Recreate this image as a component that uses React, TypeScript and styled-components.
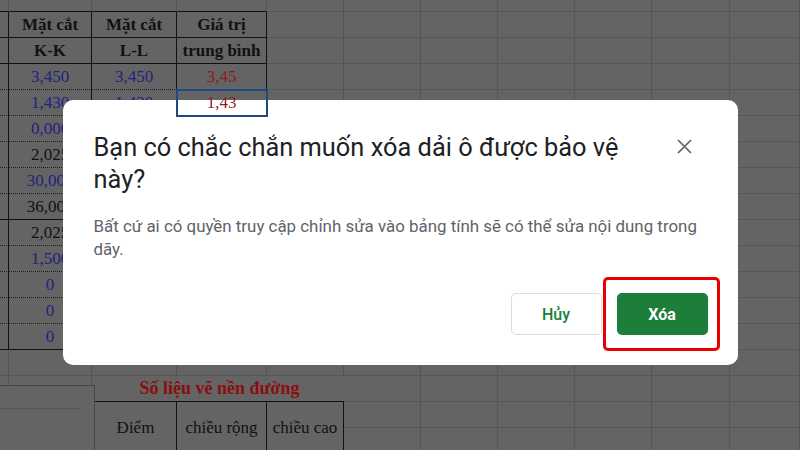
import styled, { createGlobalStyle, css } from "styled-components";

const GlobalStyle = createGlobalStyle`
  html, body {
    margin: 0;
    padding: 0;
  }
  body {
    font-family: Roboto, "Noto Sans", sans-serif;
  }
`;

type Line = "grid" | "solid" | "dotted";
type Tone = "black" | "blue" | "red";

interface CellSpec {
  text?: string;
  tone?: Tone;
  bold?: boolean;
  bottom: Line;
  right: Line;
  selected?: boolean;
}

const toneColor: Record<Tone, string> = {
  black: "#111",
  blue: "#222280",
  red: "#8e1c1c",
};

const lineStyle = (l: Line) =>
  l === "solid" ? "1px solid #111" : l === "dotted" ? "1px dotted #1a1a1a" : "1px solid #565656";

const Page = styled.div`
  position: relative;
  width: 800px;
  height: 450px;
  overflow: hidden;
  background-color: #646464;
`;

const Sheet = styled.div`
  display: grid;
  grid-template-columns: 9px 83px 85px 90px repeat(5, 77px) 78px 1fr;
  grid-template-rows: 12px repeat(17, 26px);
  font-family: "Liberation Serif", "Times New Roman", serif;
  font-size: 17px;
`;

const Cell = styled.div<{
  $bottom: Line;
  $right: Line;
  $tone: Tone;
  $bold: boolean;
  $selected: boolean;
}>`
  box-sizing: border-box;
  border-bottom: ${(p) => lineStyle(p.$bottom)};
  border-right: ${(p) => lineStyle(p.$right)};
  color: ${(p) => toneColor[p.$tone]};
  font-weight: ${(p) => (p.$bold ? 700 : 400)};
  display: flex;
  align-items: center;
  justify-content: center;
  white-space: nowrap;
  overflow: hidden;
  ${(p) =>
    p.$selected &&
    css`
      outline: 2px solid #1f4a80;
      outline-offset: -1px;
      position: relative;
      z-index: 1;
    `}
`;

/* floating picture of another table pasted on the sheet */
const Picture = styled.div`
  position: absolute;
  left: 0;
  top: 376px;
  display: grid;
  grid-template-columns: 95px 82px 90px 77px;
  grid-template-rows: 25px 52px;
  font-family: "Liberation Serif", "Times New Roman", serif;
  font-size: 17px;
  color: #111;
`;

const NoteBox = styled.div`
  grid-row: 1 / 3;
  margin-top: 9px;
  background-color: #646464;
  border-top: 1px solid #474747;
  border-right: 1px solid #474747;
`;

const NoteRule = styled.div`
  width: 80px;
  height: 22px;
  border-bottom: 1px solid #575757;
`;

const PictureTitle = styled.div`
  grid-column: 2 / 5;
  background-color: #646464;
  display: flex;
  align-items: center;
  justify-content: center;
  color: #8b0f0f;
  font-weight: 700;
  font-size: 18px;
`;

const PictureCell = styled.div`
  background-color: #646464;
  border-top: 1px solid #111;
  border-right: 1px solid #111;
  display: flex;
  align-items: center;
  justify-content: center;
  white-space: nowrap;
`;

const Scrim = styled.div`
  position: fixed;
  inset: 0;
  display: flex;
  justify-content: center;
  align-items: flex-start;
  padding-top: 100px;
`;

const Dialog = styled.div`
  box-sizing: border-box;
  width: 675px;
  height: 265px;
  background-color: #fff;
  border-radius: 10px;
  padding: 31px 30px 30px 31px;
  display: flex;
  flex-direction: column;
`;

const Header = styled.div`
  display: flex;
  align-items: flex-start;
`;

const Title = styled.h2`
  flex: 1;
  margin: 0;
  font-family: Roboto, "Noto Sans", sans-serif;
  font-weight: 400;
  font-size: 25.4px;
  line-height: 32px;
  color: #202124;
`;

const CloseButton = styled.button`
  width: 46px;
  height: 30px;
  padding: 0;
  border: none;
  background: none;
  display: flex;
  align-items: center;
  justify-content: center;
`;

const Message = styled.p`
  margin: 20px 0 0;
  font-size: 16.9px;
  line-height: 23px;
  color: #5f6368;
`;

const Actions = styled.div`
  margin-top: auto;
  display: flex;
  justify-content: flex-end;
  gap: 15px;
`;

const Button = styled.button<{ $primary?: boolean }>`
  box-sizing: border-box;
  width: 91px;
  height: 42px;
  border-radius: 5px;
  font-family: Roboto, "Noto Sans", sans-serif;
  font-size: 16px;
  font-weight: ${(p) => (p.$primary ? 700 : 500)};
  border: ${(p) => (p.$primary ? "none" : "1px solid #dadce0")};
  background-color: ${(p) => (p.$primary ? "#1d7d3b" : "#fff")};
  color: ${(p) => (p.$primary ? "#fff" : "#188038")};
`;

const Highlight = styled.span`
  position: relative;
  display: flex;
  &::after {
    content: "";
    position: absolute;
    inset: -16px -12px -16px -14px;
    border: 3px solid #e60000;
    border-radius: 5px;
  }
`;

const COLS = 11;
const ROWS = 18;

const kk: [string, Tone][] = [
  ["3,450", "blue"],
  ["1,430", "blue"],
  ["0,000", "blue"],
  ["2,025", "black"],
  ["30,000", "blue"],
  ["36,000", "black"],
  ["2,025", "black"],
  ["1,500", "blue"],
  ["0", "blue"],
  ["0", "blue"],
  ["0", "blue"],
];

const avg = ["3,45", "1,43"];

function buildSheet(): CellSpec[][] {
  const rows: CellSpec[][] = [];
  for (let r = 0; r < ROWS; r++) {
    const row: CellSpec[] = [];
    for (let c = 0; c < COLS; c++) {
      const inTable = c <= 3 && r <= 13;
      let bottom: Line = "grid";
      let right: Line = "grid";
      if (inTable) {
        const v = r - 3;
        if (r <= 2 || v === 5 || v === 10) bottom = "solid";
        else bottom = "dotted";
        if (r >= 1) right = "solid";
      }
      const cell: CellSpec = { bottom, right };
      if (r === 1 && c >= 1 && c <= 3) {
        cell.text = ["Mặt cắt", "Mặt cắt", "Giá trị"][c - 1];
        cell.bold = true;
      }
      if (r === 2 && c >= 1 && c <= 3) {
        cell.text = ["K-K", "L-L", "trung bình"][c - 1];
        cell.bold = true;
      }
      if (r >= 3 && r <= 13) {
        const i = r - 3;
        // rows below the dialog's top edge are hidden in L-L and the average column
        if (c === 1 || (c === 2 && i < 2)) {
          cell.text = kk[i][0];
          cell.tone = kk[i][1];
        }
        if (c === 3) {
          cell.text = avg[i];
          cell.tone = "red";
          cell.selected = i === 1;
        }
      }
      row.push(cell);
    }
    rows.push(row);
  }
  return rows;
}

function CloseIcon() {
  return (
    <svg width="15" height="15" viewBox="0 0 15 15">
      <path d="M1 1 L14 14 M14 1 L1 14" stroke="#5f6368" strokeWidth="1.7" fill="none" />
    </svg>
  );
}

function App() {
  const sheet = buildSheet();
  return (
    <Page>
      <GlobalStyle />
      <Sheet>
        {sheet.map((row, r) =>
          row.map((cell, c) => (
            <Cell
              key={`${r}-${c}`}
              $bottom={cell.bottom}
              $right={cell.right}
              $tone={cell.tone ?? "black"}
              $bold={!!cell.bold}
              $selected={!!cell.selected}
            >
              {cell.text}
            </Cell>
          ))
        )}
      </Sheet>
      <Picture>
        <NoteBox>
          <NoteRule />
        </NoteBox>
        <PictureTitle>Số liệu vẽ nền đường</PictureTitle>
        <PictureCell>Điểm</PictureCell>
        <PictureCell>chiều rộng</PictureCell>
        <PictureCell>chiều cao</PictureCell>
      </Picture>
      <Scrim>
        <Dialog>
          <Header>
            <Title>Bạn có chắc chắn muốn xóa dải ô được bảo vệ này?</Title>
            <CloseButton aria-label="Đóng">
              <CloseIcon />
            </CloseButton>
          </Header>
          <Message>
            Bất cứ ai có quyền truy cập chỉnh sửa vào bảng tính sẽ có thể sửa nội dung trong dãy.
          </Message>
          <Actions>
            <Button>Hủy</Button>
            <Highlight>
              <Button $primary>Xóa</Button>
            </Highlight>
          </Actions>
        </Dialog>
      </Scrim>
    </Page>
  );
}

export default App;
